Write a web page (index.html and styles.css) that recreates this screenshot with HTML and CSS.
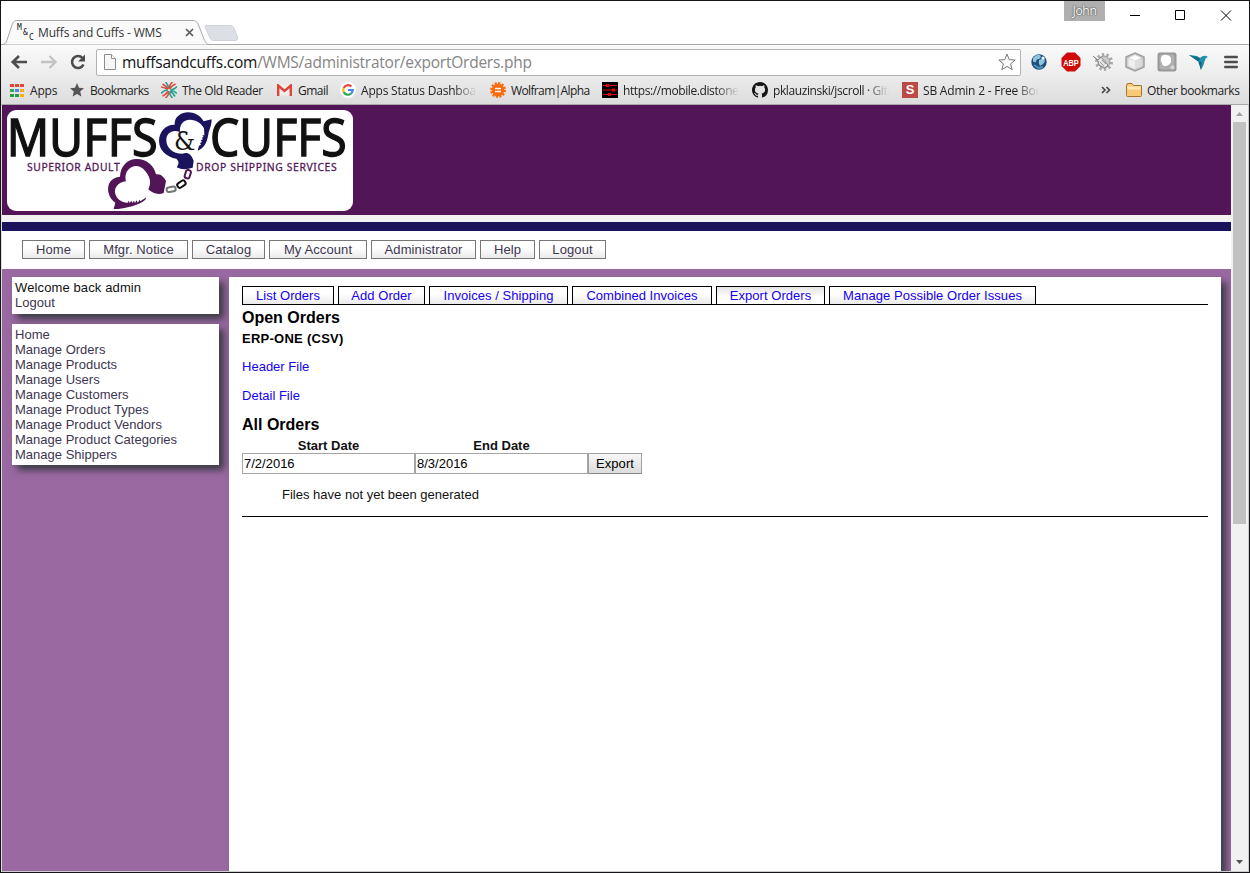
FILE: index.html
```html
<!DOCTYPE html>
<html lang="en">
<head>
<meta charset="utf-8">
<title>Muffs and Cuffs - WMS</title>
<link rel="stylesheet" href="styles.css">
</head>
<body>
<div class="window">
  <header class="titlebar">
    <div class="tab">
      <svg class="tab-shape" width="240" height="25" viewBox="0 0 240 25">
        <path d="M0 24.500H1C4 24.500 5 23 6 20L11 5C12.500 1.500 13 .5 16 .5H191C195 .5 196 1.500 197.500 5L203 19C205 23.500 206 24.500 209 24.500H240" fill="#fafafa" stroke="#a6a6a6"/>
        <path d="M205 5.500H229C231 5.500 232 6 233 8L236.500 17C237 19.500 236 20.500 234 20.500H213C211 20.500 210 20 209 18L204.500 8C204 6 204 5.500 205 5.500Z" fill="#dce0e6" stroke="#d0d4da"/>
      </svg>
      <span class="favicon"><i>M</i><i>&amp;</i><i>C</i></span>
      <span class="tab-title">Muffs and Cuffs - WMS</span>
      <svg class="tab-close" width="9" height="9" viewBox="0 0 9 9"><path d="M1 1L8 8M8 1L1 8" stroke="#5a5a5a" stroke-width="1.700"/></svg>
    </div>
    <div class="user-badge">John</div>
    <svg class="win-controls" width="104" height="12" viewBox="0 0 104 12" fill="none" stroke="#000">
      <path d="M0 6.500H10M45.500 1.500H54.500V10.500H45.500ZM91 1.500L101 11.500M101 1.500L91 11.500"/>
    </svg>
  </header>

  <div class="toolbar">
    <svg class="nav-icons" width="78" height="20" viewBox="0 0 78 20" fill="none">
      <path d="M2.500 10H17M9 4L2.800 10L9 16" stroke="#4d4d4d" stroke-width="2.700"/>
      <path d="M31 10H45M39.500 4L45.500 10L39.500 16" stroke="#c3c3c3" stroke-width="2.300"/>
      <path d="M72.500 6A6 6 0 1 0 73.500 12.500" stroke="#4d4d4d" stroke-width="2.600"/>
      <path d="M75 2.500V9.500H68Z" fill="#4d4d4d"/>
    </svg>
    <div class="omnibox">
      <svg width="12" height="16" viewBox="0 0 12 16"><path d="M.5.5H7.500L11.500 4.500V15.500H.5Z" fill="#f6f6f6" stroke="#8c8c8c"/><path d="M7.500.5V4.500H11.500" fill="#fff" stroke="#8c8c8c"/></svg>
      <span class="url"><b>muffsandcuffs.com</b>/WMS/administrator/exportOrders.php</span>
      <svg class="star" width="18" height="18" viewBox="0 0 18 18"><path d="M9 1L11.200 6.700L17.200 7L12.600 10.800L14.200 16.700L9 13.400L3.800 16.700L5.400 10.800L.8 7L6.800 6.700Z" fill="#fff" stroke="#777" stroke-linejoin="round"/></svg>
    </div>
    <div class="extensions">
      <svg width="16" height="16" viewBox="0 0 16 16"><circle cx="8" cy="8" r="7.700" fill="#1d4f7c"/><path d="M2 4Q5 0 9 1Q11 3 8 5Q5 5 5 8Q3 9 2 7ZM8 6L13 4Q15 7 12 10L9 12Q7 9 8 6Z" fill="#8fc4dc"/><path d="M3 11L8 14L12 13" stroke="#4f93b8" stroke-width="2" fill="none"/><circle cx="12" cy="4" r="1.600" fill="#e9f6fb"/></svg>
      <svg width="20" height="20" viewBox="0 0 20 20"><path d="M6 .5H14L19.500 6V14L14 19.500H6L.5 14V6Z" fill="#d00a0a"/><text x="2.200" y="13.500" textLength="15.600" lengthAdjust="spacingAndGlyphs" class="abp">ABP</text></svg>
      <svg width="20" height="20" viewBox="0 0 20 20"><circle cx="11" cy="10" r="6.500" fill="none" stroke="#aaa" stroke-width="5" stroke-dasharray="2 2"/><circle cx="11" cy="10" r="6" fill="#c9c9c9" stroke="#999"/><path d="M0 4L5 8L8 5L15 13L12 16L6 13L5 9Z" fill="#e4e4e4" stroke="#8b8b8b"/><path d="M9 8L13 12M7 10L11 14" stroke="#999"/></svg>
      <svg width="20" height="20" viewBox="0 0 20 20"><path d="M10 1L19 5V15L10 19L1 15V5Z" fill="#cfcfcf" stroke="#a0a0a0" stroke-width="1.500"/><path d="M4 6L10 3L16 6L10 8.500Z" fill="#fff"/><path d="M10 9V17L3.500 14V6.500Z" fill="#f0f0f0"/><path d="M10 9V17L16.500 14V6.500Z" fill="#dedede"/></svg>
      <svg width="20" height="20" viewBox="0 0 20 20"><rect x=".5" y=".5" width="19" height="19" rx="2.500" fill="#999"/><rect x="2.500" y="2.500" width="15" height="15" rx="2" fill="#b0b0b0"/><path d="M4 6Q5 2 10 3Q15 4 14 10Q12 14 8 14Q5 14 5 11Q3 9 4 6Z" fill="#fff"/><circle cx="15.500" cy="15.500" r="2" fill="#d6d6d6"/></svg>
      <svg width="20" height="18" viewBox="0 0 20 18"><path d="M0 2L8 3L11 5Q15 1 19 4Q16 5 16 7Q15 12 12 17L10 9Z" fill="#2390ad"/><path d="M0 2L10 9L11 5ZM9 8L13 9L12 17Z" fill="#126b85"/></svg>
      <svg width="14" height="14" viewBox="0 0 14 14"><path d="M1.300 2H12.700M1.300 7H12.700M1.300 12H12.700" stroke="#4d4d4d" stroke-width="2.600" stroke-linecap="round"/></svg>
    </div>
  </div>

  <nav class="bookmarks">
    <a><svg width="14" height="14" viewBox="0 0 14 14"><path d="M0 1H4V4H0Z M5 1H9V4H5Z M10 1H14V4H10Z" fill="#ea4335"/><path d="M0 6H4V9H0Z" fill="#34a853"/><path d="M5 6H9V9H5Z" fill="#4285f4"/><path d="M10 6H14V9H10Z" fill="#fbae05"/><path d="M0 11H4V14H0Z M5 11H9V14H5Z" fill="#299c4b"/><path d="M10 11H14V14H10Z" fill="#fbae05"/></svg><span class="t-apps">Apps</span></a>
    <a><svg width="14" height="14" viewBox="0 0 14 14"><path d="M7 0L9 4.800L14 5.200L10.200 8.600L11.400 13.600L7 11L2.600 13.600L3.800 8.600L0 5.200L5 4.800Z" fill="#555"/></svg><span class="t-marks">Bookmarks</span></a>
    <a><svg width="16" height="16" viewBox="0 0 16 16" fill="none" stroke-width="1.600"><path d="M8 6.800Q8 3 11.500 0M9 7.200Q10 4 14.500 2M8 9.200Q8 13 4.500 16M7 8.800Q6 12 1.500 14M0 5Q4 5.500 6.800 7.500M1.500 2Q5 4 7.500 7" stroke="#e0493d"/><path d="M4.500 0Q7.500 3 7.500 6M9.500 8Q13 8 16 4.500M9 9Q12 11 14 14.500M8.500 10Q8.500 13 11.500 16M0 11.500Q3 8 6.500 8M9.500 8.500Q13 8.500 16 11.500" stroke="#22a391"/></svg><span>The Old Reader</span></a>
    <a><svg width="15" height="12" viewBox="0 0 15 12"><path d="M1 .5H14V11.500H1Z" fill="#eee"/><path d="M1.200 12V1.500L7.500 7L13.800 1.500V12" fill="none" stroke="#dc4536" stroke-width="2.400"/></svg><span class="t-marks">Gmail</span></a>
    <a><svg width="16" height="16" viewBox="0 0 16 16" fill="none" stroke-width="2.200"><circle cx="8" cy="8" r="8" fill="#fff"/><path d="M3.700 6A4.800 4.800 0 0 1 11.400 4.500" stroke="#ea4335"/><path d="M3.700 6A4.800 4.800 0 0 0 3.700 10" stroke="#fbbc05"/><path d="M3.700 10A4.800 4.800 0 0 0 11 11.700" stroke="#34a853"/><path d="M8 8H12.800Q12.800 10 11 11.700" stroke="#4285f4"/></svg><span class="fade t-wide">Apps Status Dashboard</span></a>
    <a><svg width="16" height="16" viewBox="0 0 16 16"><circle cx="8" cy="8" r="6.800" fill="none" stroke="#fa6a0a" stroke-width="2.400" stroke-dasharray="2.100 1.460"/><circle cx="8" cy="8" r="6.300" fill="#fa6a0a"/><path d="M5 6.500H11M5 9.500H11" stroke="#fff" stroke-width="1.300"/></svg><span class="t-tight">Wolfram|Alpha</span></a>
    <a><svg width="16" height="16" viewBox="0 0 16 16"><path d="M0 0H16V16H0Z"/><path d="M1 3.500H15M1 8H15M1 12.500H15" stroke="#d8090f" stroke-width="1.200"/><path d="M4 2H7V5H4ZM10 6.500H13V9.500H10ZM6 11H9V14H6Z" fill="#d8090f"/></svg><span class="fade">https://mobile.distone.com</span></a>
    <a><svg width="16" height="16" viewBox="0 0 16 16"><path fill="#171515" d="M8 0C3.580 0 0 3.580 0 8c0 3.540 2.290 6.530 5.470 7.590.4.070.55-.17.55-.38 0-.19-.01-.82-.01-1.490-2.010.37-2.530-.49-2.690-.94-.09-.23-.48-.94-.82-1.130-.28-.15-.68-.52-.01-.53.63-.01 1.080.58 1.230.82.72 1.210 1.870.87 2.330.66.07-.52.28-.87.51-1.070-1.780-.2-3.640-.89-3.640-3.950 0-.87.31-1.590.82-2.150-.08-.2-.36-1.020.08-2.120 0 0 .67-.21 2.200.82a7.600 7.600 0 0 1 4 0c1.530-1.040 2.200-.82 2.200-.82.44 1.100.16 1.920.08 2.120.51.56.82 1.270.82 2.150 0 3.070-1.870 3.750-3.650 3.950.29.25.54.73.54 1.480 0 1.070-.01 1.930-.01 2.200 0 .21.15.46.55.38A8.010 8.010 0 0 0 16 8c0-4.420-3.580-8-8-8z"/></svg><span class="fade">pklauzinski/jscroll · GitHub</span></a>
    <a><i class="s-icon">S</i><span class="fade t-wide">SB Admin 2 - Free Bootstrap</span></a>
    <a><svg width="10" height="8" viewBox="0 0 10 8"><path d="M1 1L4 4L1 7M5.500 1L8.500 4L5.500 7" fill="none" stroke="#444" stroke-width="1.600"/></svg></a>
    <a class="other"><svg width="16" height="14" viewBox="0 0 16 14"><path d="M.5 2.500Q.5.5 2 .5H6L7.500 2.500H15.500V12.500Q15.500 13.500 14.500 13.500H1.500Q.5 13.500.5 12.500Z" fill="#f8c976" stroke="#a8732c"/><path d="M1.500 5H14.500" stroke="#ffe9b5" stroke-width="3"/></svg><span>Other bookmarks</span></a>
  </nav>

  <div class="viewport">
    <div class="page">
      <div class="banner">
        <svg class="logo" width="346" height="101" viewBox="21 18 1038 303">
          <text class="brand" x="20" y="157" textLength="453" lengthAdjust="spacingAndGlyphs">MUFFS</text>
          <text class="brand" x="630" y="157" textLength="410" lengthAdjust="spacingAndGlyphs">CUFFS</text>
          <text class="amp" x="522" y="139" textLength="64" lengthAdjust="spacingAndGlyphs">&amp;</text>
          <text class="tagline" x="81" y="201" textLength="278">SUPERIOR ADULT</text>
          <text class="tagline" x="588" y="201" textLength="422">DROP SHIPPING SERVICES</text>
          <path fill="#1b145c" d="M635 46L611 52C596 24 558 18 538 33C525 42 524 52 524 62C497 61 477 84 477 110C477 139 500 159 529 164C537 171 538 179 530 190C546 198 563 196 578 191L581 171C574 149 562 143 547 149C518 149 499 132 499 108C499 86 518 75 540 84C538 62 549 47 570 47C590 47 604 58 612 73L613 94L607 94L611 99L605 101L609 106L602 109L606 114L600 117L603 122L597 125L593 140C618 132 623 105 626 85C631 70 635 60 635 46Z"/>
          <path fill="#521557" d="M439 280L436 287C421 301 378 315 341 315L346 296C326 282 321 259 326 243C330 228 345 219 360 218C361 187 382 165 410 165C442 165 463 187 468 211C483 208 492 220 498 231L491 267C474 274 455 267 445 256C454 238 451 221 440 207C430 190 412 180 394 190C378 199 374 216 378 232C354 235 341 252 346 270C350 286 368 297 383 296L386 290L389 297L394 290L397 297L402 290L405 297L410 289L413 296L419 287L421 292Z"/>
          <g fill="none" stroke-width="6"><rect x="556" y="198" width="15" height="25" rx="6" stroke="#521557" transform="rotate(17 563 210)"/><rect x="531" y="233" width="26" height="15" rx="6" stroke="#111" transform="rotate(-35 544 240)"/><rect x="500" y="249" width="27" height="14" rx="6" stroke="#747474" transform="rotate(-9 513 256)"/></g>
        </svg>
      </div>
      <div class="stripe"></div>
      <nav class="menu">
        <a class="w63">Home</a><a class="w99">Mfgr. Notice</a><a class="w73">Catalog</a><a class="w98">My Account</a><a class="w105">Administrator</a><a class="w55">Help</a><a class="w67">Logout</a>
      </nav>
      <div class="content">
        <aside>
          <div class="box welcome"><span>Welcome back admin</span><a>Logout</a></div>
          <div class="box"><a>Home</a><a>Manage Orders</a><a>Manage Products</a><a>Manage Users</a><a>Manage Customers</a><a>Manage Product Types</a><a>Manage Product Vendors</a><a>Manage Product Categories</a><a>Manage Shippers</a></div>
        </aside>
        <main>
          <nav class="subtabs">
            <a class="w92">List Orders</a><a class="w87">Add Order</a><a class="w139">Invoices / Shipping</a><a class="w140">Combined Invoices</a><a class="w109 active">Export Orders</a><a class="w207">Manage Possible Order Issues</a>
          </nav>
          <h2>Open Orders</h2>
          <h3>ERP-ONE (CSV)</h3>
          <p><a>Header File</a></p>
          <p><a>Detail File</a></p>
          <h2 class="all">All Orders</h2>
          <form class="dates">
            <label>Start Date</label><label>End Date</label><span></span>
            <input type="text" value="7/2/2016"><input type="text" value="8/3/2016"><button type="button">Export</button>
          </form>
          <div class="notice">Files have not yet been generated</div>
        </main>
      </div>
    </div>
    <div class="scrollbar">
      <svg width="7" height="4" viewBox="0 0 7 4"><path d="M0 4L3.500 0L7 4Z" fill="#a3a3a3"/></svg>
      <div class="thumb"></div>
      <svg class="down" width="7" height="4" viewBox="0 0 7 4"><path d="M0 0H7L3.500 4Z" fill="#505050"/></svg>
    </div>
  </div>
</div>
</body>
</html>
```
FILE: styles.css
```css
* { box-sizing: border-box; }
body { margin: 0; overflow: hidden; background: #fff; }
svg { display: block; flex: none; }
a { text-decoration: none; }

.window { width: 1250px; height: 873px; border: 1px solid #151317; display: flex; flex-direction: column; background: #fff; font: 12px "Open Sans", "Noto Sans", sans-serif; color: #222; }

.titlebar { height: 44px; display: flex; align-items: flex-start; background: linear-gradient(#fff 43px, #a6a6a6 43px); }
.tab { display: grid; grid-template-columns: 14px 22px 145px 59px; width: 240px; height: 25px; margin-top: 19px; align-items: center; margin-right: 823px; }
.tab-shape { grid-area: 1 / 1 / 2 / 5; }
.favicon { grid-area: 1 / 2; display: flex; align-items: flex-start; height: 18px; padding-left: 2px; }
.favicon i { font: 8px/8px "DejaVu Sans Mono", monospace; width: 6px; color: #111; }
.favicon i:nth-child(2) { margin-top: 5px; }
.favicon i:nth-child(3) { margin-top: 10px; }
.tab-title { grid-area: 1 / 3; letter-spacing: -0.15px; padding-left: 1px; white-space: nowrap; color: #333; }
.tab-close { grid-area: 1 / 4; margin-left: 3px; }
.user-badge { width: 41px; height: 20px; background: #b0b0b0; color: #fff; font-size: 12px; letter-spacing: -0.3px; line-height: 20px; text-align: center; text-shadow: 0 0 2px #444, 0 0 1px #444; }
.win-controls { margin: 8px 0 0 25px; }

.toolbar { height: 33px; display: flex; align-items: center; background: linear-gradient(#fafafa, #ebebeb); padding: 1px 0 0 9px; }
.nav-icons { margin-right: 8px; }
.omnibox { width: 925px; height: 27px; border: 1px solid #b3b3b3; border-radius: 2px; background: #fff; display: flex; align-items: center; padding: 0 4px 0 7px; }
.url { font-size: 15.500px; letter-spacing: -0.24px; color: #858585; margin-left: 6px; flex: 1; white-space: nowrap; }
.url b { font-weight: 400; color: #111; }
.extensions { display: grid; grid-template-columns: repeat(7, 32px); justify-items: center; align-items: center; margin-left: 2px; }
.abp { font: bold 9.500px "Liberation Sans", sans-serif; fill: #fff; }

.bookmarks { height: 26px; display: grid; grid-template-columns: 60px 91px 116px 63px 150px 112px 150px 150px 199px 25px 120px; padding: 0 0 2px 9px; background: linear-gradient(#ebebeb, #dcdcdc); align-items: center; }
.bookmarks a { display: flex; align-items: center; gap: 5px; white-space: nowrap; }
.bookmarks span { letter-spacing: -0.4px; }
.bookmarks .t-apps { margin-left: 1px; letter-spacing: -0.2px; }
.bookmarks .t-marks { margin-left: 1px; letter-spacing: -0.5px; }
.bookmarks .t-tight { letter-spacing: -0.63px; }
.bookmarks .t-wide { letter-spacing: -0.2px; }
.bookmarks .fade { width: 116px; overflow: hidden; -webkit-mask-image: linear-gradient(90deg, #000 80%, transparent); mask-image: linear-gradient(90deg, #000 80%, transparent); }
.s-icon { width: 16px; height: 16px; background: #bb4a47; color: #fff; font: bold 13px/16px "Liberation Sans", sans-serif; text-align: center; }

.viewport { flex: 1; min-height: 0; display: flex; border-top: 1px solid #a9a9a9; border-left: 1px solid #ddd; border-right: 1px solid #ccc; border-bottom: 1px solid #ccc; }
.page { width: 1229px; display: flex; flex-direction: column; font: 13px/15px "Liberation Sans", Arial, sans-serif; letter-spacing: 0.01px; }
.banner { height: 110px; background: #521557; padding: 5px; flex: none; }
.logo { background: #fff; border-radius: 9px; }
.brand { font: 153px "Noto Sans", sans-serif; letter-spacing: 0; fill: #111; stroke: #111; stroke-width: 4px; }
.amp { font: 80px "DejaVu Serif", serif; letter-spacing: 0; fill: #111; }
.tagline { font: 31px "Noto Sans", sans-serif; letter-spacing: 0; fill: #521557; stroke: #521557; stroke-width: .8px; }
.stripe { height: 16px; border-top: 7px solid #f2f2f2; background: #1b145c; flex: none; }
.menu { height: 38px; padding: 9px 0 0 20px; display: flex; gap: 4px; flex: none; }
.menu a { height: 19px; border: 1px solid #777; background: linear-gradient(#fff 40%, #eaeaea); line-height: 17px; text-align: center; color: #3d3650; letter-spacing: .1px; }
.w63 { width: 63px; } .w99 { width: 99px; } .w73 { width: 73px; } .w98 { width: 98px; } .w105 { width: 105px; } .w55 { width: 55px; } .w67 { width: 67px; }
.w92 { width: 92px; } .w87 { width: 87px; } .w139 { width: 139px; } .w140 { width: 140px; } .w109 { width: 109px; } .w207 { width: 207px; }

.content { flex: 1; min-height: 0; overflow: hidden; background: #9a69a2; padding: 8px 10px 0; display: flex; gap: 10px; }
aside { width: 207px; display: flex; flex-direction: column; gap: 10px; }
.box { background: #fff; box-shadow: 5px 5px 7px #3b3b44; padding: 3px 3px 3px; display: flex; flex-direction: column; color: #3d3650; }
.welcome { padding-bottom: 4px; }
.box span { color: #111; letter-spacing: .12px; }
main { width: 992px; height: 640px; flex: none; background: #fff; box-shadow: 5px 5px 7px #3b3b44; padding: 9px 13px 0; color: #111; }
.subtabs { display: flex; gap: 4px; border-bottom: 1px solid #000; height: 19px; }
.subtabs a { height: 18px; border: 1px solid #000; border-bottom: 0; background: linear-gradient(#fff 40%, #eaeaea); line-height: 18px; text-align: center; color: #1600f0; letter-spacing: .04px; }
.subtabs .active { background: linear-gradient(#e4e4e4, #fff 60%); }
h2 { font-size: 16px; line-height: 20px; margin: 3px 0 0; height: 21px; letter-spacing: 0; color: #000; }
h3 { font-size: 13px; line-height: 15px; margin: 2px 0 13px; height: 15px; color: #000; letter-spacing: .26px; }
p { margin: 0 0 14px; }
p a { color: #1600f0; }
h2.all { margin-top: -3px; height: 23px; line-height: 22px; }
.dates { display: grid; grid-template-columns: 173px 173px 54px; grid-template-rows: 16px 21px; margin: 0; }
.dates label { font-weight: 700; text-align: center; padding-top: 1px; }
.dates input { width: 173px; height: 21px; margin: 0; border: 1px solid #a5a5a5; padding: 0 1px; font: 13px "Liberation Sans", Arial, sans-serif; }
.dates button { margin: 0; padding: 0; border: 1px solid #a0a0a0; border-bottom-color: #888; background: linear-gradient(#f7f7f7, #dcdcdc); font: 13px "Liberation Sans", Arial, sans-serif; letter-spacing: .1px; }
.notice { height: 43px; padding: 13px 0 0 40px; border-bottom: 1px solid #000; }

.scrollbar { width: 17px; background: #f1f1f1; display: flex; flex-direction: column; align-items: center; padding-top: 7px; }
.thumb { width: 13px; height: 402px; margin-top: 6px; background: #c1c1c1; }
.down { margin: auto 0 7px; }
```
